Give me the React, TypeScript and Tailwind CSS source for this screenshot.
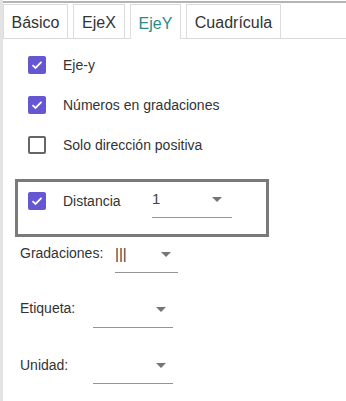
import React from "react";

const tabs = [
  { label: "Básico", w: "w-[65px]" },
  { label: "EjeX", w: "w-[52px]" },
  { label: "EjeY", w: "w-[51px]", active: true },
  { label: "Cuadrícula", w: "w-[95px]" },
];

function Check({ checked }: { checked: boolean }) {
  if (!checked) {
    return <div className="w-[18px] h-[18px] rounded-[2px] border-2 border-[#666666] bg-white" />;
  }
  return (
    <div className="w-[18px] h-[18px] rounded-[2px] bg-[#6557d2] flex items-center justify-center">
      <svg width="12" height="10" viewBox="0 0 12 10">
        <path d="M1.5 5.2 L4.5 8 L10.5 1.8" fill="none" stroke="white" strokeWidth="1.8" />
      </svg>
    </div>
  );
}

function Arrow() {
  return (
    <svg width="10" height="5" viewBox="0 0 10 5">
      <path d="M0 0 L10 0 L5 5 Z" fill="#757575" />
    </svg>
  );
}

// underline select, value sits high above the line
function Select({ value, w, arrowPad }: { value?: string; w: string; arrowPad: string }) {
  return (
    <div className={`${w} h-[30px] border-b border-[#949494] flex items-start justify-between pt-[3px]`}>
      <span className="text-[15px] leading-[16px] text-[#444444]">{value}</span>
      <span className={`${arrowPad} h-[16px] flex items-center`}>
        <Arrow />
      </span>
    </div>
  );
}

export default function App() {
  return (
    <div
      className="w-[346px] h-[401px] bg-white flex overflow-hidden"
      style={{ fontFamily: '"Liberation Sans", Arial, sans-serif' }}
    >
      <div className="w-[3px] h-full bg-[#e3e3e3]" />
      <div className="flex-1 flex flex-col">
        <div className="h-[1px]" />
        <div className="h-[2px] bg-[#b4b4b4]" />
        <div className="flex h-[36px] pt-[1px] border-b border-[#d9d9d9]">
          {tabs.map((t) => (
            <div
              key={t.label}
              className={`${t.w} mr-[5px] border border-b-0 border-[#dcdcdc] bg-white flex items-center justify-center pt-[3px] text-[16px] ${
                t.active ? "text-[#2b8a85] h-[35px]" : "text-[#333333] h-[34px]"
              }`}
            >
              {t.label}
            </div>
          ))}
        </div>
        <div className="flex flex-col text-[14px] leading-[16px] text-[#333333]">
          <div className="flex items-center gap-[17px] pl-[25px] mt-[17px] h-[18px]">
            <Check checked />
            <span>Eje-y</span>
          </div>
          <div className="flex items-center gap-[17px] pl-[25px] mt-[22px] h-[18px]">
            <Check checked />
            <span>Números en gradaciones</span>
          </div>
          <div className="flex items-center gap-[17px] pl-[25px] mt-[22px] h-[18px]">
            <Check checked={false} />
            <span>Solo dirección positiva</span>
          </div>
          <div className="ml-[12px] mt-[25px] w-[254px] h-[58px] border-[3px] border-[#7a7a7a] flex items-start pl-[10px]">
            <div className="mt-[10px]">
              <Check checked />
            </div>
            <span className="ml-[17px] w-[89px] mt-[11px]">Distancia</span>
            <div className="mt-[6px]">
              <Select value="1" w="w-[80px]" arrowPad="pr-[10px]" />
            </div>
          </div>
          <div className="flex items-start pl-[17px] mt-[6px]">
            <span className="w-[95px] mt-[2px]">Gradaciones:</span>
            <Select value="|||" w="w-[63px]" arrowPad="pr-[7px]" />
          </div>
          <div className="flex items-start pl-[17px] mt-[25px]">
            <span className="w-[73px] mt-[2px]">Etiqueta:</span>
            <Select w="w-[80px]" arrowPad="pr-[7px]" />
          </div>
          <div className="flex items-start pl-[17px] mt-[26px]">
            <span className="w-[73px] mt-[3px]">Unidad:</span>
            <Select w="w-[80px]" arrowPad="pr-[7px]" />
          </div>
        </div>
      </div>
    </div>
  );
}
